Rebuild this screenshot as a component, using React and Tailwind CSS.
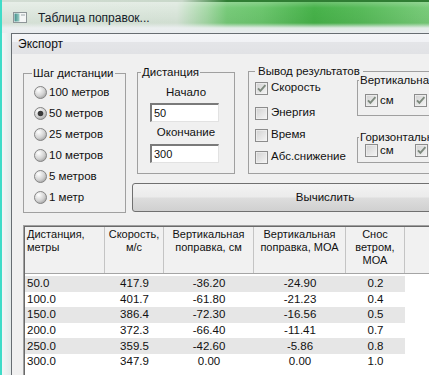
import React from "react";

const STEPS = ["100 метров", "50 метров", "25 метров", "10 метров", "5 метров", "1 метр"];

const COLS = [
  { w: "w-[80px]", head: ["Дистанция,", "метры"], left: true },
  { w: "w-[59px]", head: ["Скорость,", "м/с"] },
  { w: "w-[90px]", head: ["Вертикальная", "поправка, см"] },
  { w: "w-[92px]", head: ["Вертикальная", "поправка, МОА"] },
  { w: "w-[59px]", head: ["Снос", "ветром,", "МОА"] },
];

const ROWS = [
  ["50.0", "417.9", "-36.20", "-24.90", "0.2"],
  ["100.0", "401.7", "-61.80", "-21.23", "0.4"],
  ["150.0", "386.4", "-72.30", "-16.56", "0.5"],
  ["200.0", "372.3", "-66.40", "-11.41", "0.7"],
  ["250.0", "359.5", "-42.60", "-5.86", "0.8"],
  ["300.0", "347.9", "0.00", "0.00", "1.0"],
];

function Radio({ checked }) {
  return (
    <svg width="13" height="13" viewBox="0 0 13 13" className="shrink-0">
      <defs>
        <radialGradient id="rg" cx="35%" cy="30%" r="80%">
          <stop offset="0" stopColor="#ffffff" />
          <stop offset="0.6" stopColor="#d2d2d2" />
          <stop offset="1" stopColor="#9c9c9c" />
        </radialGradient>
      </defs>
      <circle cx="6.5" cy="6.5" r="6" fill="url(#rg)" stroke="#858585" />
      {checked && <circle cx="6.5" cy="6.5" r="2.8" fill="#3a3a3a" />}
    </svg>
  );
}

function Check({ checked }) {
  return (
    <svg width="13" height="13" viewBox="0 0 13 13" className="shrink-0">
      <defs>
        <linearGradient id="cg" x1="0" y1="0" x2="1" y2="1">
          <stop offset="0" stopColor="#cfcfcf" />
          <stop offset="1" stopColor="#f7f7f7" />
        </linearGradient>
      </defs>
      <rect x="0.5" y="0.5" width="12" height="12" fill="url(#cg)" stroke="#8c8c8c" />
      <rect x="1.5" y="1.5" width="10" height="10" fill="none" stroke="#f4f4f4" strokeWidth="0.6" />
      {checked && (
        <path d="M3 6.3L5.4 8.9L10.4 3.2" fill="none" stroke="#7d897d" strokeWidth="1.9" />
      )}
    </svg>
  );
}

function App() {
  return (
    <div className="w-[429px] h-[375px] overflow-hidden bg-[#3fdcc8] font-['Liberation_Sans',Arial,sans-serif] text-[#111111]">
      <div className="ml-[2px] w-[560px] h-full flex flex-col bg-[#e7ecec]">
        {/* title bar */}
        <div className="h-[33px] shrink-0 flex flex-col bg-[linear-gradient(90deg,#e2eae3_0px,#dde8de_175px,#a6d9a7_205px,#78cb7a_225px,#6cc66e_260px,#47b24a_312px,#58bb5a_360px,#7acc7b_427px,#7acc7b_560px)]">
          <div className="h-[2px] bg-[linear-gradient(90deg,#d3ddd4_0px,#c9d8ca_180px,#2f7d33_225px,#2f7d33_560px)]" />
          <div className="flex-1 flex items-center pl-[11px] bg-[linear-gradient(180deg,rgba(255,255,255,0.2)_0px,rgba(255,255,255,0)_6px,rgba(0,60,0,0.06)_21px,rgba(236,239,241,0.92)_26px,#e9ecef_31px)]">
            <svg width="14" height="11" viewBox="0 0 14 11" className="mb-[1px]">
              <defs>
                <linearGradient id="ic" x1="0" y1="0" x2="1" y2="0">
                  <stop offset="0" stopColor="#3f8f8a" />
                  <stop offset="1" stopColor="#9fd0c8" />
                </linearGradient>
              </defs>
              <rect x="0.5" y="0.5" width="13" height="10" fill="#f4f6f6" stroke="#8d9598" />
              <rect x="1.5" y="1.5" width="5" height="8" fill="url(#ic)" />
              <rect x="8" y="2" width="4" height="2" fill="#c9cfd1" />
            </svg>
            <span className="ml-[11px] text-[12px] text-[#15202a]">Таблица поправок...</span>
          </div>
        </div>

        <div className="flex-1 flex">
          <div className="w-[9px] shrink-0 bg-[linear-gradient(90deg,#f3f6f6,#e3e9e9)]" />
          <div className="flex-1 flex flex-col border-l border-t border-[#676d72]">
            {/* menu bar */}
            <div className="h-[20px] shrink-0 flex items-center pl-[6px] text-[12px] bg-[linear-gradient(180deg,#f5f6f8_0%,#f1f2f5_38%,#e4e5e8_42%,#e1e2e5_100%)]">
              Экспорт
            </div>

            {/* client */}
            <div className="flex-1 bg-[#f0f0f0] pl-[11px] pt-[10px] text-[11.5px]">
              <div className="flex items-start">
                <fieldset className="mt-[2px] w-[103px] h-[147px] shrink-0 border border-[#a0a0a0] pl-[8px]">
                  <legend className="px-[1px] leading-[14px]">Шаг дистанции</legend>
                  <div className="pt-[2px] ml-[2px]">
                    {STEPS.map((s) => (
                      <div key={s} className="h-[21px] flex items-center gap-[2px]">
                        <Radio checked={s === "50 метров"} />
                        <span>{s}</span>
                      </div>
                    ))}
                  </div>
                </fieldset>

                <div className="ml-[6px] flex flex-col">
                  <div className="flex items-start">
                    <fieldset className="ml-[5px] mt-[1px] w-[98px] h-[109px] shrink-0 border border-[#a0a0a0] px-[3px]">
                      <legend className="px-[1px] leading-[14px]">Дистанция</legend>
                      <div className="mt-[6px] text-center leading-[14px]">Начало</div>
                      <div className="ml-[9px] mt-[4px] w-[69px] h-[19px] flex items-center pl-[2px] bg-white border-t-2 border-l-2 border-[#7a7a7a] border-b border-r border-b-[#e2e2e2] border-r-[#e2e2e2] text-[11px]">
                        50
                      </div>
                      <div className="mt-[3px] text-center leading-[14px]">Окончание</div>
                      <div className="ml-[9px] mt-[5px] w-[69px] h-[19px] flex items-center pl-[2px] bg-white border-t-2 border-l-2 border-[#7a7a7a] border-b border-r border-b-[#e2e2e2] border-r-[#e2e2e2] text-[11px]">
                        300
                      </div>
                    </fieldset>

                    <fieldset className="ml-[13px] w-[280px] h-[110px] shrink-0 border border-[#a0a0a0] pl-[6px]">
                      <legend className="px-[3px] leading-[14px]">Вывод результатов</legend>
                      <div className="flex items-start">
                        <div className="w-[102px] shrink-0 flex flex-col">
                          <div className="mt-[3px] h-[14px] flex items-center gap-[3px]">
                            <Check checked />
                            <span>Скорость</span>
                          </div>
                          <div className="mt-[11px] h-[14px] flex items-center gap-[3px]">
                            <Check />
                            <span>Энергия</span>
                          </div>
                          <div className="mt-[8px] h-[14px] flex items-center gap-[3px]">
                            <Check />
                            <span>Время</span>
                          </div>
                          <div className="mt-[8px] h-[14px] flex items-center gap-[3px]">
                            <Check />
                            <span>Абс.снижение</span>
                          </div>
                        </div>
                        <div className="mt-[-5px] flex flex-col">
                          <fieldset className="w-[160px] h-[43px] border border-[#a0a0a0] pl-[1px]">
                            <legend className="px-[1px] leading-[14px]">Вертикальная</legend>
                            <div className="mt-[7px] ml-[6px] h-[13px] flex items-center">
                              <div className="w-[49px] flex items-center gap-[2px]">
                                <Check checked />
                                <span>см</span>
                              </div>
                              <Check checked />
                            </div>
                          </fieldset>
                          <fieldset className="mt-[14px] w-[160px] h-[33px] border border-[#a0a0a0] pl-[1px]">
                            <legend className="px-[1px] leading-[14px]">Горизонтальная</legend>
                            <div className="ml-[6px] h-[13px] flex items-center">
                              <div className="w-[50px] flex items-center gap-[2px]">
                                <Check />
                                <span>см</span>
                              </div>
                              <Check checked />
                            </div>
                          </fieldset>
                        </div>
                      </div>
                    </fieldset>
                  </div>

                  <button
                    type="button"
                    className="mt-[9px] w-[386px] h-[29px] rounded-[3px] border border-[#707070] bg-[linear-gradient(180deg,#f3f3f3_0%,#ebebeb_48%,#dddddd_52%,#d0d0d0_100%)] flex items-center justify-center"
                  >
                    Вычислить
                  </button>
                </div>
              </div>

              {/* table */}
              <div className="mt-[12px] w-[520px] h-[200px] bg-white border-t border-l border-[#a0a0a0]">
                <div className="h-full border-t border-l border-[#6a6a6a]">
                  <div className="flex h-[47px] bg-[#f1f1f1] border-b border-[#a5a5a5] text-[11px] leading-[13px]">
                    {COLS.map((c) => (
                      <div
                        key={c.head.join(" ")}
                        className={`${c.w} shrink-0 border-r border-[#c4c4c4] pt-[1px] ${c.left ? "pl-[2px]" : "text-center"}`}
                      >
                        {c.head.map((h) => (
                          <div key={h}>{h}</div>
                        ))}
                      </div>
                    ))}
                    <div className="flex-1" />
                  </div>
                  <div className="pt-[2px]">
                    {ROWS.map((r, i) => (
                      <div
                        key={r[0]}
                        className={`flex w-[380px] h-[15.6px] items-center ${i % 2 === 0 ? "bg-[#e6e6e6]" : "bg-white"}`}
                      >
                        {r.map((v, j) => (
                          <div
                            key={COLS[j].head[0] + j}
                            className={`${COLS[j].w} shrink-0 ${j === 0 ? "pl-[2px]" : "text-center"}`}
                          >
                            {v}
                          </div>
                        ))}
                      </div>
                    ))}
                  </div>
                </div>
              </div>
            </div>
          </div>
        </div>
      </div>
    </div>
  );
}

export default App;
